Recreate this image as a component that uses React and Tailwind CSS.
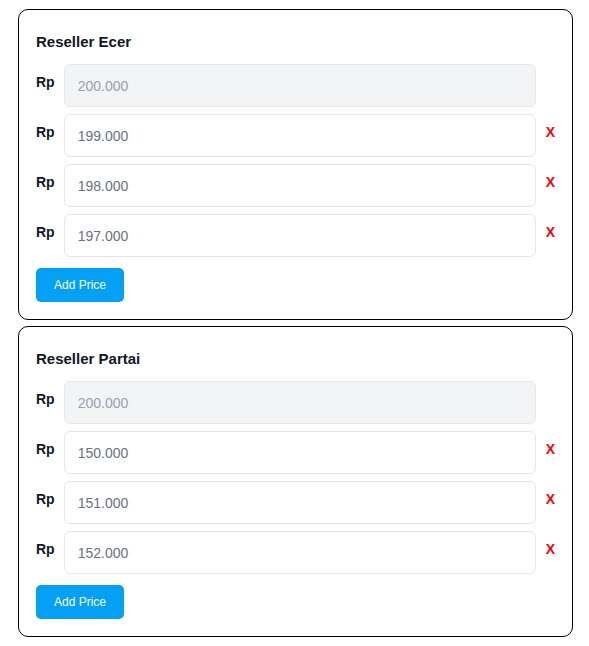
import React, { useState } from 'react';

const initialGroups = [
  { id: 'ecer', title: 'Reseller Ecer', base: '200.000', prices: ['199.000', '198.000', '197.000'] },
  { id: 'partai', title: 'Reseller Partai', base: '200.000', prices: ['150.000', '151.000', '152.000'] },
];

const PriceRow = ({ value, disabled, onChange, onRemove }) => (
  <div className="flex items-start gap-[9px]">
    <span className="pt-[8px] text-[14px] leading-[20px] font-bold text-gray-900">Rp</span>
    <input
      type="text"
      value={value}
      disabled={disabled}
      onChange={(e) => onChange && onChange(e.target.value)}
      className={`flex-1 min-w-0 h-[43px] rounded-[6px] border border-gray-200 pl-[13px] text-[14px] outline-none ${
        disabled ? 'bg-gray-100 text-gray-400' : 'bg-white text-gray-500'
      }`}
    />
    <button
      type="button"
      onClick={onRemove}
      className={`ml-[1px] pt-[8px] text-[14px] leading-[20px] font-bold text-[#ff0000] ${disabled ? 'invisible' : ''}`}
    >
      X
    </button>
  </div>
);

const PriceCard = ({ group, onUpdate }) => {
  const setPrice = (i, v) => {
    const next = [...group.prices];
    next[i] = v;
    onUpdate({ ...group, prices: next });
  };

  return (
    <div className="rounded-[10px] border border-black bg-white px-[17px] pt-[22px] pb-[17px]">
      <h3 className="mb-[12px] text-[15px] leading-[20px] font-bold text-gray-900">{group.title}</h3>
      <div className="flex flex-col gap-[7px]">
        <PriceRow value={group.base} disabled />
        {group.prices.map((p, i) => (
          <PriceRow
            key={i}
            value={p}
            onChange={(v) => setPrice(i, v)}
            onRemove={() => onUpdate({ ...group, prices: group.prices.filter((_, idx) => idx !== i) })}
          />
        ))}
      </div>
      <button
        type="button"
        onClick={() => onUpdate({ ...group, prices: [...group.prices, ''] })}
        className="mt-[11px] h-[34px] rounded-[5px] bg-[#03a0f4] px-[18px] text-[12px] text-white"
      >
        Add Price
      </button>
    </div>
  );
};

export default function App() {
  const [groups, setGroups] = useState(initialGroups);

  const updateGroup = (g) => setGroups((prev) => prev.map((x) => (x.id === g.id ? g : x)));

  return (
    <div className="min-h-screen bg-white pt-[9px] pl-[18px]" style={{ fontFamily: '"Liberation Sans", Arial, sans-serif' }}>
      <div className="flex w-[555px] flex-col gap-[6px]">
        {groups.map((g) => (
          <PriceCard key={g.id} group={g} onUpdate={updateGroup} />
        ))}
      </div>
    </div>
  );
}
